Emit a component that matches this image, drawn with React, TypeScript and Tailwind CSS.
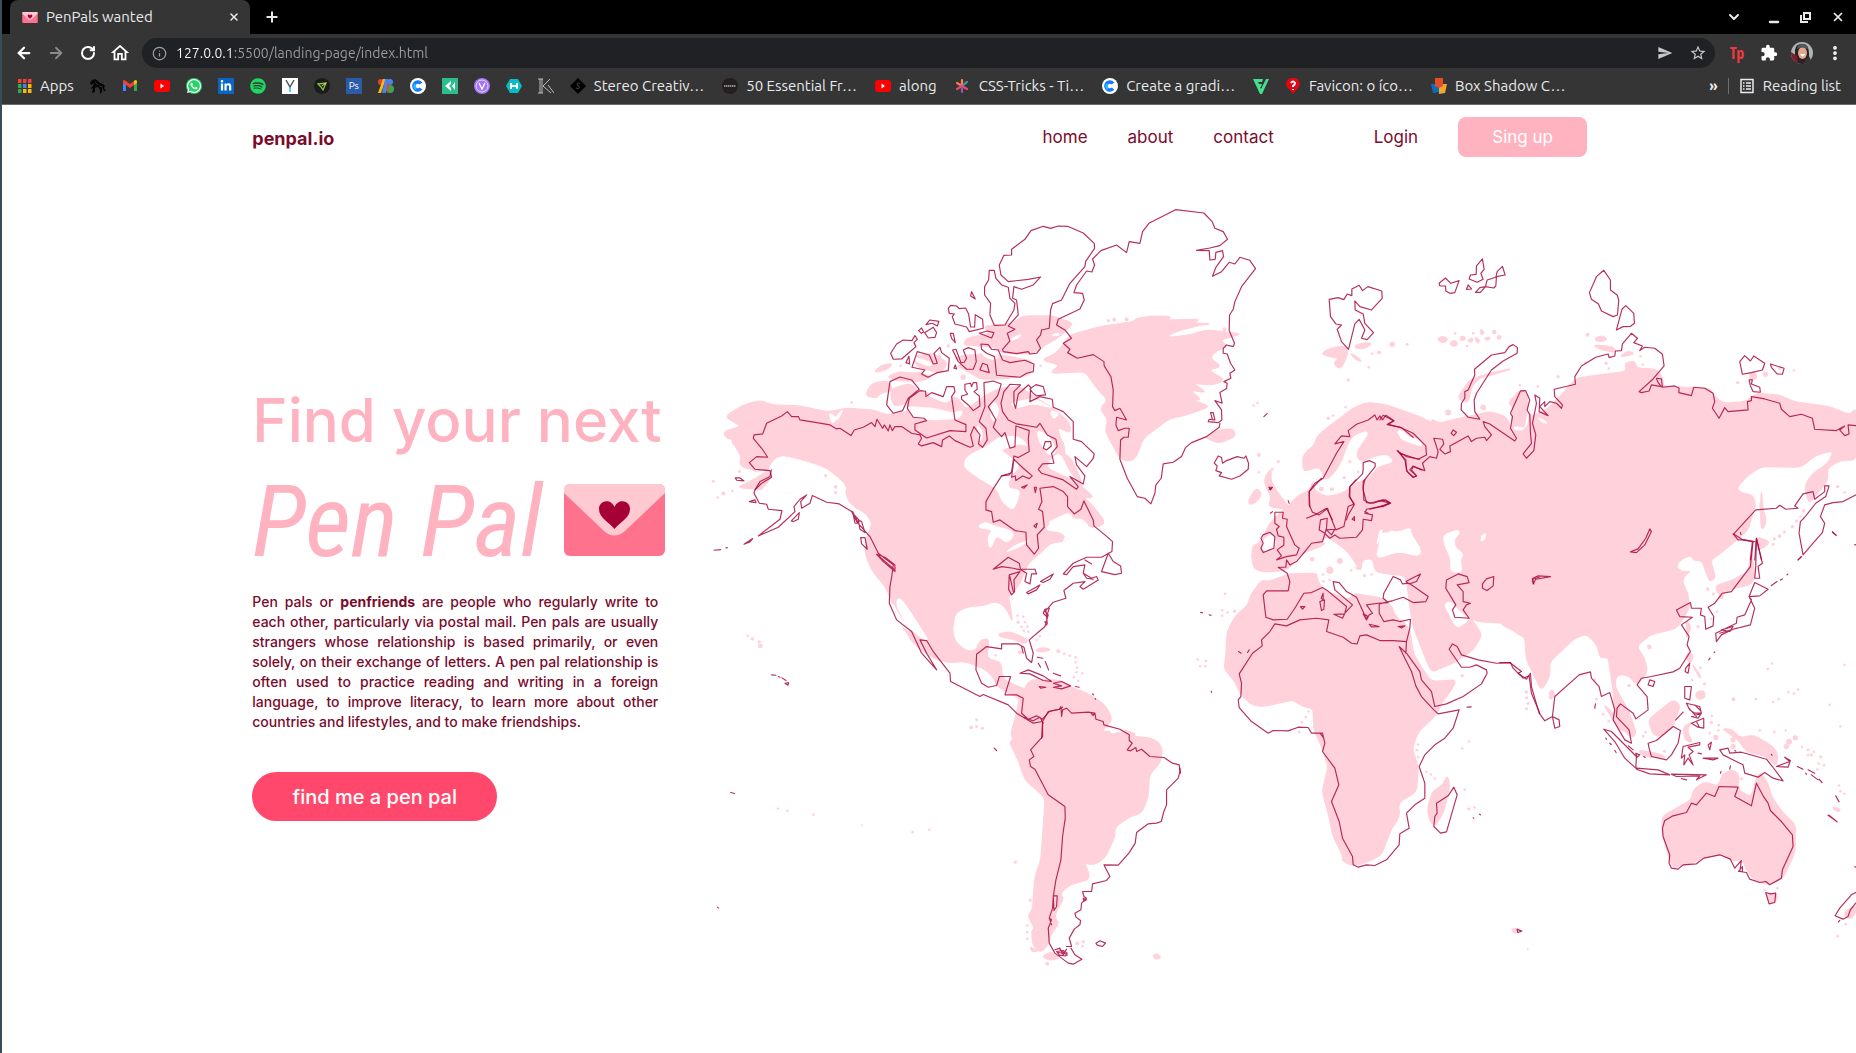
import React from 'react';
import type { ReactNode } from 'react';
import {
  ArrowLeft,
  ArrowRight,
  ChevronDown,
  EllipsisVertical,
  Info,
  Minus,
  Plus,
  RotateCw,
  X,
} from 'lucide-react';
import { FaLinkedinIn, FaSpotify, FaWhatsapp } from 'react-icons/fa';
import { MdExtension, MdOutlineHome, MdSend, MdStarBorder } from 'react-icons/md';

/* ---------- Envelope logo ---------- */

function Envelope({ className }: { className: string }) {
  return (
    <svg viewBox="0 0 101 72" className={className} aria-hidden="true">
      <rect width="101" height="72" rx="6" fill="#ff728d" />
      <path d="M6 0H95Q101 0 101 6V9L61 47Q50 56 40 47L0 9V6Q0 0 6 0Z" fill="#ffc9d2" />
      <path
        d="M50.500 45C45 38 35 34 35 25C35 16 47 14 50.500 23C54 14 66 16 66 25C66 34 56 38 50.500 45Z"
        fill="#a60037"
      />
    </svg>
  );
}

/* ---------- Favicons on the bookmarks bar ---------- */

function Icon({ children, box = '0 0 16 16' }: { children: ReactNode; box?: string }) {
  return (
    <svg viewBox={box} className="size-4 shrink-0" aria-hidden="true">
      {children}
    </svg>
  );
}

const AppsGrid = () => (
  <Icon>
    {['#f44336', '#f44336', '#f44336', '#34a853', '#4285f4', '#fbbc05', '#34a853', '#fbbc05', '#fbbc05'].map((c, i) => (
      <rect key={i} x={2 + (i % 3) * 5} y={1 + Math.floor(i / 3) * 5} width="3.500" height="4" fill={c} />
    ))}
  </Icon>
);

const Horse = () => (
  <Icon>
    <path
      d="M0 5L2 2L5 1L8 3L10 5L13 6L15 8L14 10L16 13L14 13L12 10L12 14L10 16L10 12L8 9L5 10L5 14L2 15L3 10L0 11L3 8L4 5L1 7Z"
      fill="#050505"
    />
    <path d="M5 4L8 7M9 8L13 9M6 9L7 13" stroke="#333" strokeWidth="1" />
  </Icon>
);

const Gmail = () => (
  <Icon>
    <path d="M1 13V4L4 6V13Z" fill="#4285f4" />
    <path d="M12 13V6L15 4V13Z" fill="#34a853" />
    <path d="M1 5V3Q2 1 4 3L8 6L12 3V7L8 10L4 7Z" fill="#ea4335" />
    <path d="M12 3Q14 1 15 3V5L12 7Z" fill="#fbbc04" />
  </Icon>
);

const YouTube = () => (
  <Icon>
    <rect y="2" width="16" height="12" rx="3" fill="#f00" />
    <path d="M6.500 5.500L10 8L6.500 10.500Z" fill="#fff" />
  </Icon>
);

const WhatsApp = () => (
  <span className="flex size-4 shrink-0 items-center justify-center rounded-full bg-[#25d366]">
    <FaWhatsapp className="size-4 text-white" />
  </span>
);

const LinkedIn = () => (
  <span className="flex size-4 shrink-0 items-center justify-center bg-[#0a66c2]">
    <FaLinkedinIn className="size-3 text-white" />
  </span>
);

const Spotify = () => <FaSpotify className="size-4 shrink-0 text-[#1ed760]" />;

const LetterY = () => (
  <Icon>
    <rect width="16" height="16" fill="#fff" />
    <path d="M4 2L8 9L12 2" fill="none" stroke="#555" strokeWidth="1.500" />
    <path d="M8 9V14" stroke="#39b6e8" strokeWidth="1.500" />
  </Icon>
);

const DarkArrow = () => (
  <Icon>
    <circle cx="8" cy="8" r="8" fill="#1b1b1b" />
    <path d="M4 6L12 5L9 12L7 9Z" fill="none" stroke="#8bc34a" strokeWidth="1.300" />
    <path d="M8 8L12 5" stroke="#d4e157" />
  </Icon>
);

const Photoshop = () => (
  <span className="flex size-4 shrink-0 items-center justify-center bg-[#2a5caa] font-['Ubuntu','Open_Sans',sans-serif] text-[10px] leading-none text-white">
    Ps
  </span>
);

const ColourMarks = () => (
  <Icon>
    <circle cx="3" cy="4" r="3" fill="#ea4335" />
    <path d="M8 1L3 15H0L5 1Z" fill="#fbbc04" />
    <path d="M7 1H10L8 15H4Z" fill="#4285f4" />
    <circle cx="12" cy="4" r="3" fill="#4285f4" />
    <circle cx="12" cy="11" r="4" fill="#34a853" />
    <path d="M9 5H11V14H9Z" fill="#ea4335" />
  </Icon>
);

const BlueC = () => (
  <Icon>
    <circle cx="8" cy="8" r="8" fill="#fff" />
    <path d="M11 5.500A4 4 0 1 0 11 10.500" fill="none" stroke="#1677ff" strokeWidth="3.500" />
    <path d="M5 6A4 4 0 0 0 6 11" fill="none" stroke="#19c8ff" strokeWidth="2" />
  </Icon>
);

const GreenSquare = () => (
  <Icon>
    <rect width="16" height="16" fill="#2dbe8d" />
    <path d="M9 3V6L7 8L9 10V13L3 8ZM13 4V12L10 8Z" fill="#fff" />
  </Icon>
);

const PurpleV = () => (
  <Icon>
    <circle cx="8" cy="8" r="8" fill="#a675f5" />
    <circle cx="8" cy="8" r="6" fill="none" stroke="#e5d6ff" />
    <path d="M5 5L8 11L11 5" fill="none" stroke="#fff" strokeWidth="1.300" />
  </Icon>
);

const TealHex = () => (
  <Icon>
    <path d="M4 1H12L16 8L12 15H4L0 8Z" fill="#08bdc9" />
    <path d="M5 5V11M11 5V11M5 8H11" stroke="#fff" strokeWidth="2" />
  </Icon>
);

const LetterK = () => (
  <Icon>
    <path d="M2 1V15M4 1V15M12 1L5 8L13 15M10 7L16 15M0 1H5M0 15H5" fill="none" stroke="#ccc" strokeWidth="0.900" />
  </Icon>
);

const Diamond = () => (
  <Icon>
    <path d="M8 0L16 8L8 16L0 8Z" fill="#000" />
    <path d="M10 6Q8 4 7 6Q7 8 9 8Q10 10 8 11L6 10" fill="none" stroke="#444" />
  </Icon>
);

const DarkDisc = () => (
  <Icon>
    <circle cx="8" cy="8" r="8" fill="#231f20" />
    <path d="M2 8H14" stroke="#aaa" strokeWidth="1.500" strokeDasharray="1.500 0.500" />
  </Icon>
);

const Burst = () => (
  <Icon>
    <g strokeWidth="2.200" strokeLinecap="round">
      <path d="M7 2V8" stroke="#ff8a50" />
      <path d="M2 5L7 8" stroke="#f57c4a" />
      <path d="M12 4L7 8" stroke="#3aa0b8" />
      <path d="M12 11L7 8" stroke="#e8476a" />
      <path d="M7 14V8" stroke="#8e5ab8" />
      <path d="M2 11L7 8" stroke="#e8476a" />
    </g>
  </Icon>
);

const GreenMark = () => (
  <Icon>
    <path d="M0 1H10L9 4H5L6 6H9L8 9H7L8 11L13 1H16L9 16H7Z" fill="#43e08f" />
  </Icon>
);

const RedPin = () => (
  <Icon>
    <path d="M8 0A6 6 0 0 1 12 11L8 16L4 11A6 6 0 0 1 8 0Z" fill="#e30613" />
    <path d="M6 5Q8 2 10 5Q10 7 8 8V9M8 11V12" fill="none" stroke="#fff" strokeWidth="2" />
  </Icon>
);

const Cups = () => (
  <Icon>
    <path d="M0 6H8V14L2 15Z" fill="#0a6ebd" />
    <path d="M8 6H16L14 15L8 16Z" fill="#f0a830" />
    <path d="M4 0H12V8L8 10L4 8Z" fill="#e44d26" />
  </Icon>
);

const ReadingListIcon = () => (
  <Icon>
    <path
      d="M2 1.500H14V14.500H2ZM4 5H5.500M4 8H5.500M4 11H5.500M7 5H12M7 8H12M7 11H12"
      fill="none"
      stroke="#e8eaed"
      strokeWidth="1.500"
    />
  </Icon>
);

type Bookmark = { name: string; icon: ReactNode; label?: string };

const BOOKMARKS: Bookmark[] = [
  { name: 'Horse', icon: <Horse /> },
  { name: 'Gmail', icon: <Gmail /> },
  { name: 'YouTube', icon: <YouTube /> },
  { name: 'WhatsApp', icon: <WhatsApp /> },
  { name: 'LinkedIn', icon: <LinkedIn /> },
  { name: 'Spotify', icon: <Spotify /> },
  { name: 'Y', icon: <LetterY /> },
  { name: 'Arrow', icon: <DarkArrow /> },
  { name: 'Photo editor', icon: <Photoshop /> },
  { name: 'Colours', icon: <ColourMarks /> },
  { name: 'Coolors', icon: <BlueC /> },
  { name: 'Green', icon: <GreenSquare /> },
  { name: 'Purple', icon: <PurpleV /> },
  { name: 'Teal', icon: <TealHex /> },
  { name: 'K', icon: <LetterK /> },
  { name: 'Stereo', icon: <Diamond />, label: 'Stereo Creativ…' },
  { name: 'Fonts', icon: <DarkDisc />, label: '50 Essential Fr…' },
  { name: 'Along', icon: <YouTube />, label: 'along' },
  { name: 'CSS-Tricks', icon: <Burst />, label: 'CSS-Tricks - Ti…' },
  { name: 'Gradient', icon: <BlueC />, label: 'Create a gradi…' },
  { name: 'Green mark', icon: <GreenMark /> },
  { name: 'Favicon', icon: <RedPin />, label: 'Favicon: o íco…' },
  { name: 'Box Shadow', icon: <Cups />, label: 'Box Shadow C…' },
];

/* ---------- Browser chrome ---------- */

function TabStrip() {
  return (
    <div className="flex h-[34px] items-center justify-between bg-black px-2 text-[#e8eaed]">
      <div className="flex h-full items-center">
        <div className="flex h-full w-60 items-center gap-2 rounded-t-lg bg-[#353535] pl-3 pr-2">
          <Envelope className="h-[11px] w-4" />
          <span className="flex-1 text-[15px] leading-5">PenPals wanted</span>
          <button aria-label="Close tab" className="flex size-4 items-center justify-center">
            <X className="size-3" strokeWidth={3} />
          </button>
        </div>
        <button aria-label="New tab" className="ml-[14px] flex size-4 items-center justify-center">
          <Plus className="size-4 shrink-0" strokeWidth={3} />
        </button>
      </div>
      <div className="flex items-center gap-4 pr-0.5">
        <button aria-label="Search tabs" className="mr-2 flex size-4 items-center justify-center">
          <ChevronDown className="size-4" strokeWidth={3} />
        </button>
        <button aria-label="Minimise" className="flex size-4 items-end justify-center">
          <Minus className="size-[14px] translate-y-1" strokeWidth={4} />
        </button>
        <button aria-label="Restore" className="flex size-4 items-center justify-center">
          <svg viewBox="0 0 12 12" className="size-3" fill="none" stroke="#e8eaed" strokeWidth="2">
            <path d="M4 2H10V8H4ZM1 4V11H8" />
          </svg>
        </button>
        <button aria-label="Close window" className="flex size-4 items-center justify-center">
          <X className="size-[14px]" strokeWidth={3} />
        </button>
      </div>
    </div>
  );
}

function Toolbar() {
  return (
    <div className="flex h-9 items-center bg-[#353535] pl-[10px] pr-[11px] text-white">
      <div className="flex items-center gap-2 pt-0.5">
        <button aria-label="Back" className="flex size-6 items-center justify-center">
          <ArrowLeft className="size-[18px]" strokeWidth={3} />
        </button>
        <button aria-label="Forward" className="flex size-6 items-center justify-center text-[#8a8a8a]">
          <ArrowRight className="size-[18px]" strokeWidth={2.5} />
        </button>
        <button aria-label="Reload" className="flex size-6 items-center justify-center">
          <RotateCw className="size-4" strokeWidth={3} />
        </button>
        <button aria-label="Home" className="flex size-6 items-center justify-center">
          <MdOutlineHome className="size-[22px]" />
        </button>
      </div>
      <div className="ml-[10px] mt-0.5 flex h-[30px] flex-1 items-center rounded-full bg-[#202124] pl-[10px] pr-2">
        <Info className="mr-[9px] size-[15px] shrink-0 text-[#9aa0a6]" />
        <input
          aria-label="Address"
          defaultValue="127.0.0.1:5500/landing-page/index.html"
          className="min-w-0 flex-1 bg-[linear-gradient(90deg,#ffffff_57px,#9aa0a6_57px)] bg-clip-text text-sm text-transparent outline-none"
        />
        <div className="flex items-center gap-4 text-[#c4c7cc]">
          <button aria-label="Send" className="flex">
            <MdSend className="size-4" />
          </button>
          <button aria-label="Bookmark this page" className="flex">
            <MdStarBorder className="size-[18px]" />
          </button>
        </div>
      </div>
      <div className="ml-3 flex items-center gap-3 pt-0.5">
        <button
          aria-label="Tp extension"
          className="flex size-5 items-center justify-center font-['Open_Sans_Condensed','Ubuntu',sans-serif] text-base font-black leading-none text-[#f03a3f]"
        >
          Tp
        </button>
        <button aria-label="Extensions" className="flex size-5 items-center justify-center">
          <MdExtension className="size-[18px]" />
        </button>
        <button aria-label="Profile" className="flex">
          <svg viewBox="0 0 22 22" className="size-[22px]" aria-hidden="true">
            <clipPath id="avatar">
              <circle cx="11" cy="11" r="11" />
            </clipPath>
            <g clipPath="url(#avatar)">
              <rect width="22" height="22" fill="#a9b7b5" />
              <path d="M4 22V8Q5 1 12 2Q18 3 18 11V22Z" fill="#2b2023" />
              <path d="M0 10L6 14L7 22H0Z" fill="#7c1f2d" />
              <ellipse cx="11.500" cy="11" rx="4.500" ry="6" fill="#e0a68e" />
              <path d="M9 12H14Q12 17 9 12Z" fill="#fff" />
              <path d="M6 7Q7 1 12 2Q17 2 17 7Q11 4 6 7Z" fill="#55555c" />
              <path d="M14 18L18 14L22 22H12Z" fill="#3a3034" />
            </g>
          </svg>
        </button>
        <button aria-label="Menu" className="flex size-5 items-center justify-center">
          <EllipsisVertical className="size-[18px]" strokeWidth={3} />
        </button>
      </div>
    </div>
  );
}

function BookmarksBar() {
  return (
    <nav
      aria-label="Bookmarks"
      className="flex h-[35px] items-center justify-between whitespace-nowrap border-b border-[#6a6a6a] bg-[#353535] pb-0.5 pl-[14px] pr-[15px] text-[15px] leading-5 text-[#e8eaed]"
    >
      <div className="flex min-w-0 items-center gap-4">
        <a href="#apps" className="flex items-center gap-2">
          <AppsGrid />
          Apps
        </a>
        {BOOKMARKS.map((b) => (
          <a key={b.name} href="#bookmark" aria-label={b.name} className="flex items-center gap-2">
            {b.icon}
            {b.label && <span className="pr-0.5">{b.label}</span>}
          </a>
        ))}
      </div>
      <div className="flex items-center gap-[10px]">
        <button aria-label="More bookmarks" className="font-bold">
          »
        </button>
        <span className="h-4 w-px bg-[#6f6f6f]" />
        <a href="#reading" className="flex items-center gap-2">
          <ReadingListIcon />
          Reading list
        </a>
      </div>
    </nav>
  );
}

/* ---------- World map: soft land shapes under thin coast lines ---------- */

type Region = { at: string; land: string; water?: string; coast: string; dots?: number[][] };

const REGIONS: Region[] = [
  // Alaska, northern Canada and the Arctic islands
  {
    at: 'translate(0 0)',
    land:
      'M75 680L130 645L182 631L215 645L300 648L385 666L440 655L520 660L560 675L625 665L620 640L660 600L720 625L770 620L800 660L850 620L900 595L960 590L1010 625L1060 655L1110 700L1112 730L1070 710L1095 780L1060 780L1110 800L1140 860L1150 905L240 905L210 900L115 893L160 870L205 842L160 838L130 835L118 815L130 795L105 775L130 748L85 748L68 728L100 715L125 710Z' +
      'M495 617L515 580L565 572L580 600L540 610L530 625ZM520 548L545 525L580 520L560 540ZM560 560L600 545L640 550L670 545L700 560L660 575L590 572ZM640 500L700 490L745 520L720 550L650 530ZM570 600L630 580L655 600L620 640L580 650Z' +
      'M850 410L940 400L970 378L1060 378L1120 400L1080 440L1020 475L1000 492L910 490L880 470L790 465L800 445L870 430ZM770 500L860 490L930 500L1000 515L990 555L900 568L830 560L760 520ZM800 540L860 545L940 565L840 568Z',
    water:
      'M860 770L800 800L790 830L830 860L895 900L905 935L940 962L955 925L960 900L922 895L930 860L960 830L930 800L900 780L960 760L985 770L960 740L900 740Z' +
      'M385 668L398 705L410 680ZM400 690L430 655L415 690ZM625 650L700 655L760 670L790 660L780 685L700 690L650 685L630 670ZM680 615L740 640L760 620L725 610ZM930 640L1000 625L1060 655L1000 640L950 655ZM1010 720L1050 740L1070 785L1050 800L1020 760ZM1050 660L1080 670L1060 690ZM1080 790L1110 850L1130 870L1080 850L1040 830L1060 800ZM880 630L900 660L880 700L870 660ZM830 700L850 730L840 760Z' +
      'M210 830L235 800L265 802L330 820L380 838L432 880L440 905L180 905L215 870ZM925 450L965 432L960 442L935 452ZM1050 438L1075 428L1080 436Z' +
      'M640 500L700 520L690 530L645 512ZM740 495L790 520L760 530ZM840 470L900 500L880 510L850 500ZM660 545L730 552L700 560Z',
    coast:
      'M935 195L935 178L975 148L993 122L1030 109L1052 115L1075 108L1103 109L1150 129L1183 160L1184 175L1157 215L1155 230L1110 280L1085 330L1058 341L1052 360L1048 415L1025 420L1022 435L1010 450L1022 475L1010 490L990 492L985 485L950 491L910 485L908 478L930 453L922 430L945 418L925 408L955 375L950 330L938 325L942 290L965 298L1000 285L1022 261L985 268L925 275L903 255L898 225L912 196Z' +
      'M868 241L883 241L888 265L905 285L925 292L930 325L945 340L942 360L915 405L883 406L870 375L872 340L854 315L854 290L866 270ZM815 305L826 327L812 318Z' +
      'M745 355L752 346L770 348L778 356L797 354L806 372L812 411L824 411L826 374L848 388L850 415L808 425L800 411L765 402L757 380L763 372L748 370ZM838 430L862 423L882 428L875 444Z' +
      'M678 404L690 390L717 394L712 408L697 400ZM674 428L700 412L710 428L705 442L685 444ZM656 422L665 414L671 426L664 430ZM751 430L760 430L766 458L755 445Z' +
      'M572 490L590 462L610 450L636 452L645 437L652 448L642 458L648 470L625 490L605 507L580 508ZM618 518L627 499L629 522ZM652 485L688 495L700 522L712 520L702 490L720 472L725 488L748 505L745 542L712 548L684 562L665 552L675 540L636 532Z' +
      'M758 480L768 478L783 518L793 517L800 505L790 480L805 473L825 480L829 515L820 538L800 538L775 515ZM762 535L766 525L770 537ZM840 540L848 520L862 525L868 548ZM843 462L865 464L875 478L895 480L908 510L930 518L975 511L1002 522L1000 545L980 550L960 562L890 556L884 500L860 490L845 478Z' +
      'M570 575L600 561L635 570L658 598L625 625L608 662L580 670L560 645ZM660 602L677 604L678 620L695 608L730 620L740 590L762 590L765 605L755 620L765 690L798 704L798 725L750 722L680 744L645 720L645 702L680 692L672 685L640 682L622 655L628 625Z' +
      'M795 583L812 580L815 590L820 578L830 578L832 598L822 605L838 618L840 648L820 662L805 645L785 628L785 618L803 613L795 600Z' +
      'M903 640L912 605L930 583L962 585L942 605L942 640L947 655L955 612L985 585L992 592L990 635L1020 620L1057 628L1060 652L1090 665L1120 695L1120 748L1145 755L1183 792L1180 805L1160 830L1125 800L1130 825L1155 858L1150 882L1110 860L1135 890L1130 898L1090 870L1025 850L1015 838L1028 822L1062 820L1055 790L1072 770L1068 748L1042 735L1020 700L1010 712L950 702L925 690L908 665ZM990 597L1008 584L1030 590L1037 615L1010 618L998 608ZM1030 775L1036 755L1052 755L1054 768L1040 780ZM942 808L970 835L997 858L988 866L968 858L948 872L946 858L935 862Z' +
      'M165 900L185 880L215 862L210 842L165 838L148 818L170 800L203 802L185 775L160 745L162 735L188 732L200 700L245 678L262 665L275 680L295 680L300 690L350 698L390 705L410 717L420 715L453 737L463 720L490 712L515 698L525 710L531 688L548 715L553 705L565 723L570 705L577 722L585 710L605 710L635 730L660 735L665 745L655 762L665 768L700 758L725 770L728 750L748 738L765 752L810 772L820 768L812 735L822 710L840 735L836 762L848 772L862 750L858 715L838 695L855 650L852 578L880 573L904 582L893 618L865 650L888 690L880 712L905 740L915 728L930 775L945 770L948 708L988 722L985 748L988 785L955 803L942 798L935 845L928 855L905 858',
    dots: [[40, 874, 4], [118, 845, 4], [455, 638, 4], [1022, 528, 4], [745, 468, 5], [602, 528, 4], [790, 562, 8], [377, 857, 5], [407, 890, 5], [720, 500, 5]],
  },
  // North and Central America
  {
    at: 'translate(0 750)',
    land:
      'M90 0L115 30L125 60L118 75L150 85L165 95L205 88L190 110L110 143L160 135L200 110L240 65L270 52L380 88L432 130L440 180L500 230L515 262L500 290L495 340L515 390L555 440L570 470L590 530L640 610L690 650L740 668L800 665L860 690L885 720L905 750L960 775L960 830L940 860L935 900L1290 900L1310 880L1215 860L1235 845L1230 820L1210 790L1160 760L1110 740L1050 730L1005 725L980 750L920 725L905 705L905 668L860 655L868 600L850 597L835 610L830 630L800 635L765 605L757 570L765 520L800 500L850 497L880 485L905 490L925 515L938 548L930 490L925 470L955 440L975 395L985 370L1020 340L1050 310L1110 300L1090 275L1150 240L1170 262L1200 260L1215 245L1180 200L1150 170L1180 175L1165 155L1130 130L1100 80L1090 0Z' +
      'M895 582L930 575L985 600L975 612L945 600L900 590ZM1005 630L1030 622L1055 630L1020 637Z',
    water:
      'M830 262L855 245L890 262L925 268L945 285L920 310L890 285L870 330L862 290L880 270ZM915 338L950 314L992 300L960 320ZM1035 270L1060 240L1110 218L1122 240L1145 235L1170 262L1130 285L1085 308L1100 290L1080 275ZM592 475L605 478L640 530L685 600L670 600L625 560L590 500ZM575 485L600 530L640 575L620 570L590 540ZM465 205L500 225L517 262L490 245Z' +
      'M205 85L230 52L262 52L330 70L380 88L432 130L437 175L460 205L400 180L300 170L215 110ZM1040 250L1080 230L1110 218L1090 250Z',
    coast:
      'M930 100L905 108L878 150L858 185L858 210L875 215L880 247L900 240L945 272L978 277L980 315L1003 343L1016 325L1012 285L1033 262L1028 215L1016 208L1026 185L1020 145L1060 140L1090 155L1103 170L1103 200L1123 222L1143 208L1152 183L1180 240L1182 258L1215 285L1238 305L1236 335L1205 352L1160 352L1120 370L1090 402L1100 404L1120 380L1155 375L1150 400L1175 415L1190 410L1195 420L1150 448L1140 440L1155 425L1120 430L1092 452L1098 475L1060 487L1035 515L1045 525L1035 560L988 600L1000 640L995 668L980 655L972 622L955 612L905 612L905 627L860 620L830 643L828 690L845 730L865 742L890 737L898 710L932 710L915 765L950 765L970 775L965 820L985 838L1010 828L1028 838L1048 815L1078 808L1088 802' +
      'M165 150L162 160L178 190L200 193L205 208L246 212L240 238L175 288L235 262L285 215L282 200L300 178L320 165L302 185L305 205L330 190L337 167L380 187L418 192L455 215L470 245L510 290L535 340L580 375L575 412L570 440L568 490L590 540L635 575L665 640L710 690L680 640L660 600L680 602L700 635L750 700L752 725L840 770L850 764L925 795L950 820L1000 850L1028 845L1025 895' +
      'M880 388L925 352L958 370L962 390L940 385L905 380ZM928 405L960 395L942 420L944 455L935 465L926 448ZM960 388L1005 388L1010 402L995 402L990 432L975 425L980 400ZM980 458L1020 435L1010 450L985 462ZM1022 425L1060 402L1050 418L1030 428ZM1205 395L1225 340L1240 365L1262 378L1265 400L1245 404ZM1150 400L1160 415L1180 418' +
      'M274 243L298 218L295 238L280 245ZM148 185L165 180L168 188ZM106 114L120 114L132 123L110 121ZM132 313L158 296L150 306ZM458 215L475 250L465 250ZM475 240L485 245L495 278L480 268ZM482 293L495 293L502 328L485 312ZM530 343L555 352L585 375L585 395L550 365ZM1155 360L1175 372M1035 508L1048 505L1040 530L1030 520ZM1035 545L1040 555' +
      'M960 700L985 690L1030 708L1055 725L1030 722L990 702ZM1060 730L1085 725L1112 738L1085 747L1060 742L1085 738ZM1018 740L1038 742L1022 745ZM1126 740L1138 742M1015 670L1022 682M1012 652L1028 655M1036 665L1046 690M1060 700L1082 708M965 620L970 640M965 142L982 135L972 145ZM1003 142L1010 142L1006 158ZM1002 258L1012 250L1008 264ZM965 830L1000 843L1020 832L1030 850M255 730L266 728L264 736ZM215 705L228 706M235 710L240 712M246 714L258 722M42 331L62 329M78 324L82 323M1178 762L1181 765M1186 776L1187 778M165 150L180 125L210 110L214 90' +
      'M536 348L582 388M1038 510L1042 552M460 222L480 244M930 410L940 455',
    dots: [[118, 95, 4], [40, 124, 4], [70, 161, 6], [97, 153, 4], [53, 173, 4], [143, 588, 4], [157, 597, 5], [178, 606, 5], [181, 618, 7], [953, 527, 4], [970, 530, 4], [955, 547, 5], [975, 547, 4], [982, 560, 4], [965, 561, 4], [972, 573, 4], [985, 575, 4], [1020, 589, 4], [1010, 600, 4], [1075, 634, 6], [1093, 642, 4], [1110, 647, 4], [1127, 652, 4], [1127, 667, 4], [1131, 683, 4], [1147, 700, 4], [1122, 712, 4], [1135, 723, 4], [1130, 697, 4], [830, 840, 4], [813, 863, 5], [830, 860, 4], [847, 865, 4], [960, 638, 6], [887, 646, 4], [852, 225, 4], [407, 142, 5], [407, 158, 5]],
  },
  // Greenland, Iceland and Svalbard
  {
    at: 'translate(960 0)',
    land:
      'M65 510L110 490L150 435L240 410L340 395L350 385L400 378L455 380L440 390L540 388L520 400L575 402L500 420L445 440L500 437L560 420L610 425L665 432L600 450L625 470L590 480L570 505L605 530L565 540L615 570L580 585L520 580L560 608L510 600L545 630L515 628L570 650L500 675L450 685L410 715L370 745L350 800L330 815L300 805L270 750L255 720L265 690L240 655L265 630L235 600L195 545L90 550L120 525ZM-20 410L0 380L90 380L160 400L140 420L90 440Z' +
      'M555 740L590 722L640 716L648 738L600 760L570 750ZM905 490L930 475L975 468L985 485L975 515L960 538L940 520L958 505L920 498ZM1000 472L1025 458L1060 460L1030 478ZM990 488L1010 500L1028 515L1008 510Z' +
      'M865 780L885 765L890 740L920 715L1000 655L1040 637L1100 645L1200 680L1240 700L1240 990L820 990L800 970L820 930L870 910L920 880L900 830L850 845L848 800Z' +
      'M735 860L755 835L752 870L765 895L790 930L815 960L745 950L755 920L735 885ZM690 920L712 893L726 915L705 940L686 943Z',
    water:
      'M1000 740L1040 723L1043 735L1025 760L1005 790L1020 820L1070 800L1105 795L1118 815L1070 830L1050 860L1000 880L970 905L920 918L885 900L890 880L920 875L950 845L970 810L985 765ZM1140 735L1200 750L1210 770L1160 755ZM443 440L480 424L560 405L580 410L520 428Z',
    coast:
      'M162 308L170 285L200 243L216 246L224 225L218 207L243 182L290 165L320 188L328 155L360 160L368 125L387 100L467 59L552 69L577 95L585 115L610 125L623 148L600 167L570 174L530 181L568 182L570 210L586 208L588 187L608 182L611 200L588 232L578 259L605 245L628 217L645 222L660 202L690 211L707 236L665 290L645 335L640 358L629 375L628 422L644 460L640 470L620 465L610 475L610 490L622 492L632 520L645 540L630 550L633 565L612 575L622 580L620 596L600 608L607 640L585 632L605 660L606 690L595 698L565 695L568 688L585 690L580 668L572 668L578 690M600 700L598 712L560 740L515 758L497 773L485 800L460 817L430 822L424 865L408 885L405 910L393 942L375 925L352 920L322 865L300 808L302 750L312 742L325 742L328 715L315 715L295 722L288 705L290 682L320 690L300 655L285 662L278 650L280 600L273 560L253 528L252 515L220 494L172 505L143 488L150 478L130 460L155 445L135 420L110 405L115 388L180 357L193 330L188 310L162 308' +
      'M583 820L595 798L605 803L608 820L620 812L652 800L672 805L678 798L686 820L685 838L660 858L635 868L598 858L605 848L588 842L592 828ZM732 680L742 671' +
      'M928 328L955 323L972 329L982 312L996 317L996 297L1018 286L1028 302L1044 290L1086 303L1087 325L1055 360L1020 350L1005 333L1006 360L1030 372L1035 400L1061 428L1042 449L1025 445L1035 420L1018 388L1005 402L986 478L965 455L952 418L965 405L948 402L932 380Z' +
      'M747 892L758 892L752 900ZM805 932L808 940' +
      'M860 985L885 975L920 955L938 990M870 950L868 905L885 880L910 865L950 790L972 755L945 762L965 738L990 740L985 722L1010 703L1045 690L1065 675L1072 690L1080 678L1088 690L1098 676L1122 692L1102 704L1145 713L1180 742M1135 783L1155 810L1162 845L1180 862L1190 858L1170 840L1180 828L1205 840M1135 785L1160 800L1200 808M1030 840L1030 818L1048 812L1066 820L1066 830L1030 875L1030 900L1040 938L1060 940L1090 930L1110 938L1090 948L1050 958M1030 840L1028 852L990 890L990 920L1003 945L985 975L980 990',
    dots: [[192, 430, 8], [265, 392, 5], [283, 389, 6], [320, 388, 6], [614, 418, 6], [1117, 463, 8], [1162, 463, 4], [1077, 488, 6], [1056, 492, 4], [1047, 532, 4], [985, 570, 5], [701, 647, 4], [713, 639, 4], [717, 795, 6], [717, 847, 4], [775, 815, 5], [757, 838, 4], [925, 685, 5], [940, 677, 4], [977, 652, 4], [905, 897, 7], [936, 899, 5], [1015, 846, 4], [973, 863, 5], [990, 815, 5]],
  },
  // Siberia and the Russian Arctic
  {
    at: 'translate(2040 120)',
    land:
      'M0 530L60 540L115 575L118 600L150 600L155 565L175 580L240 565L330 545L380 560L395 600L400 530L385 520L420 480L440 490L450 560L500 540L550 490L590 445L680 432L740 425L735 400L765 393L770 415L830 418L850 445L850 470L990 475L1005 500L1030 520L1100 515L1130 490L1200 495L1240 515L1350 530L1410 555L1428 535L1428 690L1380 692L1342 715L1345 752L1287 822L1275 765L1300 730L1345 700L1362 662L1310 675L1262 712L1145 710L1105 735L1070 775L1085 790L1120 795L1128 830L1100 890L1060 940L990 995L0 995Z' +
      'M232 505L270 450L330 430L398 415L350 432L300 442L275 470L265 520ZM170 328L190 318L205 328L192 340ZM210 338L228 330L234 345L218 350ZM240 322L252 318L258 328L244 332ZM262 332L280 322L275 338ZM284 320L300 330L294 342ZM300 310L312 302L310 314ZM312 326L332 320L325 332ZM640 345L700 350L710 368L660 358ZM642 328L665 316L685 328L660 336ZM718 382L745 362L765 372ZM1145 780L1150 840L1160 870L1150 900L1142 840ZM300 530L320 535L310 540Z',
    water:
      'M50 600L75 605L95 635L65 630ZM0 695L20 680L40 690L30 700ZM470 560L505 578L490 580ZM0 910L50 908L95 893L90 920L125 965L115 978L60 965L0 978ZM190 915L240 900L220 930L230 960L250 975L225 990L195 945ZM302 920L318 908L315 930ZM910 990L935 980L930 990ZM400 590L440 595L445 560L450 520L435 600L405 600Z',
    coast:
      'M178 160L197 144L213 160L238 152L225 188L210 190L198 183L197 168L180 168ZM308 87L313 118L303 130L310 148L292 157L268 147L272 135L289 133L290 108ZM260 178L265 165L275 177ZM287 187L300 173L317 170L302 187ZM317 170L322 150L348 142L352 125L368 109L376 135L350 140L348 168L342 174Z' +
      'M672 121L692 150L692 180L712 195L717 210L713 255L700 260L665 243L656 222L635 208L629 188L650 140ZM738 227L762 250L764 280L752 289L730 290L710 300L727 237Z' +
      'M400 344L413 353L412 370L370 393L335 420L290 490L283 510L285 545L300 568L265 562L244 540L245 520L255 505L255 485L265 480L285 435L284 418L335 375L375 368L388 350Z' +
      'M0 570L10 556L42 573L25 583L60 592L100 610L138 648L140 675L115 688L60 670L52 662L78 690L80 722L100 742L110 738L95 720L100 710L135 722L128 700L150 680L170 685L175 665L162 625L188 628L192 642L180 658L195 672L212 665L210 648L265 618L275 635L290 625L315 622L320 632L335 615L315 590L310 575L330 582L405 633L410 625L392 595L398 560L392 550L422 483L437 482L450 510L442 540L450 555L452 610L455 640L430 672L440 685L462 662L468 615L458 580L470 520L465 495L480 505L478 545L505 557L480 530L495 515L495 530L510 515L530 520L545 535L548 525L525 500L523 478L587 463L585 440L605 408L648 382L685 372L688 383L705 378L707 363L725 362L728 342L755 310L773 325L762 338L788 348L780 362L795 352L825 355L848 373L853 408L820 447L778 485L785 488L808 483L815 465L845 470L835 458L830 445L845 447L848 472L885 468L898 474L897 488L935 497L942 472L975 475L1000 490L1005 515L998 535L1018 565L1035 533L1045 545L1105 540L1103 515L1115 512L1115 500L1155 507L1200 520L1205 538L1230 560L1265 553L1298 565L1305 598L1370 602L1395 588L1380 600L1395 617L1408 612L1405 585L1428 587' +
      'M214 610L220 600L230 607L222 617ZM1080 395L1095 377L1112 393L1122 378L1155 400L1148 420L1115 428L1088 433ZM1172 402L1213 415L1208 433L1192 432L1175 412ZM1108 450L1118 450L1115 462L1140 472L1142 487L1120 485L1112 468Z' +
      'M810 897L815 905L795 945L770 968L752 966L775 957L798 925ZM0 812L18 810L32 820L10 830L0 830M1128 840L1190 835L1200 826L1218 838L1255 835L1245 828L1270 792L1300 785L1305 808L1335 785L1335 768L1348 768L1338 800L1308 820L1275 862L1262 875L1258 910L1270 975L1300 940L1328 908L1335 880L1322 860L1335 825L1360 818L1390 815L1428 795M1128 840L1062 912L1090 930L1118 935L1112 990M1130 925L1145 990M1125 990L1130 925M1358 905L1370 917M1255 990L1265 980',
    dots: [[37, 343, 7], [82, 343, 4], [0, 367, 4], [343, 306, 7], [305, 302, 5], [226, 310, 4], [262, 348, 4], [280, 310, 4], [623, 314, 6], [679, 400, 5], [687, 416, 4], [782, 379, 4], [789, 404, 4], [535, 440, 5], [420, 466, 4], [474, 470, 4], [205, 548, 9], [310, 532, 8], [617, 398, 4], [1243, 421, 4], [1074, 458, 5], [1157, 433, 8], [1120, 438, 12], [1200, 415, 5], [1374, 770, 5], [1395, 787, 4], [1272, 842, 5], [1262, 860, 4], [1250, 873, 4], [1238, 890, 5], [1214, 906, 4], [1199, 918, 5], [1184, 927, 4], [1180, 943, 4], [358, 322, 7]],
  },
  // South America
  {
    at: 'translate(780 1470)',
    land:
      'M165 120L152 165L162 178L148 187L175 240L195 300L235 335L256 355L250 440L243 540L225 590L218 690L203 708L225 745L215 752L218 795L240 818L262 800L275 760L298 730L285 715L290 690L312 658L300 640L330 615L385 600L388 580L372 548L400 556L435 535L465 470L465 442L510 410L545 400L565 350L568 285L600 250L608 215L600 190L575 175L520 170L500 150L455 152L430 145L457 118L440 85L380 60L330 20L300 0L210 0L180 50Z' +
      'M245 830L275 815L300 835L270 842ZM210 800L235 815L215 815ZM578 824L598 826L602 836L585 835ZM100 0L118 0L132 25L118 25Z',
    water: 'M430 152L445 140L500 155L480 152L455 162L450 150Z',
    coast:
      'M248 125L265 95L298 88L303 80L305 110L308 90L320 85L335 100L385 97L405 100L408 118L430 125L432 135L480 148L508 165L508 182L517 190L502 210L512 213L528 203L530 215L545 208L570 230L612 233L638 250L658 255L660 275L655 295L620 330L620 375L612 395L604 425L590 430L565 432L530 458L526 490L507 520L475 556L432 555L450 590L440 602L398 612L395 635L368 635L372 650L380 655L365 670L363 690L345 700L348 712L362 722L360 735L343 748L328 775L335 800L320 800M333 805L345 825L366 838L340 853L325 850L285 820L268 790L265 745L275 720L268 715L278 685L280 650L288 600L303 540L308 470L316 415L315 380L265 345L225 268L212 260L208 240L222 230L212 210L248 170L248 125' +
      'M280 648L292 648L290 680L282 692ZM268 715L275 735M290 815L310 812L322 820L318 828L298 826ZM285 810L300 805L310 825L320 808M295 818L318 822M300 810L322 826M370 655L380 660L372 664ZM408 790L420 783L437 790L428 800L412 796ZM103 205L110 212M392 98L403 100L400 107Z',
    dots: [[50, 120, 4], [34, 143, 5], [50, 140, 4], [67, 145, 4], [166, 547, 5], [211, 661, 5], [202, 737, 4], [202, 757, 4], [202, 777, 4], [352, 791, 6], [370, 786, 5], [368, 799, 4], [262, 852, 6], [590, 830, 9]],
  },
  // Europe, Africa and the Middle East
  {
    at: 'translate(1440 870)',
    land:
      'M245 300L210 350L205 375L165 410L142 455L137 540L132 565L165 605L180 640L215 675L250 680L340 660L370 680L400 685L402 750L425 800L445 860L427 935L445 1000L460 1070L490 1130L485 1140L515 1158L560 1148L605 1125L635 1045L660 1010L655 970L710 935L715 860L697 805L715 755L770 705L785 670L815 630L830 600L755 605L730 570L700 520L690 450L640 385L610 355L520 340L510 360L430 330L412 300L412 280L330 282L265 305Z' +
      'M220 195L215 230L222 265L245 275L290 275L330 265L350 235L380 215L410 205L430 195L450 180L500 225L520 262L545 272L545 240L580 235L585 275L640 285L668 285L680 300L690 380L700 440L735 530L755 577L830 545L880 510L907 465L870 410L890 425L980 430L1015 465L1035 470L1040 540L1080 615L1080 -10L400 0L390 30L350 50L330 75L300 100L270 130L240 190Z' +
      'M803 885L810 920L790 1000L765 1040L748 1020L743 985L758 935L790 915Z',
    water:
      'M590 230L600 185L630 150L660 160L690 145L695 165L725 210L700 222L650 215L605 232ZM795 165L835 150L840 160L820 180L822 200L852 222L840 240L848 278L810 275L815 240L792 190ZM792 372L815 365L830 385L870 420L830 445L812 410ZM612 335L640 290L668 295L655 358L612 358ZM640 378L675 410L672 430L645 400ZM903 175L915 160L915 178L905 185ZM400 0L525 0L500 30L455 45L405 25ZM600 150L610 150L590 200Z' +
      'M245 185L275 160L288 185L280 210L250 215ZM425 180L445 175L500 215L532 262L520 262L470 220Z',
    coast:
      'M425 -5L388 35L388 75L398 97L418 105L443 85L452 110L468 150L492 140L505 80L523 72L508 50L510 20L528 0M555 0L550 20L552 60L570 70L600 62L632 70L600 80L560 88L555 100L578 105L575 122L550 118L548 150L530 172L480 175L465 165L450 175L432 158L418 150L422 120L442 115L440 145L428 185L395 190L375 215L350 245L330 255L320 240L318 262L295 262L322 280L330 305L325 333L260 333L250 345L258 412L280 420L322 418L345 385L372 340L395 338L428 323L440 330L500 380L495 400L518 375L465 330L460 305L478 308L500 335L530 352L552 400L560 420L568 405L578 400L560 375L595 370L625 368L610 355L612 340L640 290L662 300L668 312L688 310L745 350L738 365L700 368L670 352L640 362L598 372L598 400L612 425L640 420L660 425L692 418L690 445L680 485L640 482L600 482L560 465L540 468L532 492L515 490L490 472L440 455L447 420L410 415L360 420L320 438L285 432L270 455L245 480L247 498L218 520L178 582L185 610L183 650L175 660L178 683L215 725L265 760L280 752L325 753L355 742L385 743L395 760L428 760L435 790L428 815L465 865L477 915L455 965L478 1025L488 1075L518 1130L520 1155L535 1162L560 1155L585 1157L620 1140L658 1095L660 1062L688 1045L680 1000L705 975L735 955L735 910L718 860L735 825L765 795L795 775L820 745L838 690L775 702L762 690L725 650L708 618L695 575L675 535L658 500L680 520L720 575L725 600L755 635L765 680L800 672L850 650L905 612L922 580L920 570L890 555L870 562L845 562L808 508L818 492L832 500L845 525L895 540L950 550L992 548L1000 565L1030 595L1048 588L1055 640L1080 700' +
      'M680 485L678 520M678 305L722 282L710 305L688 312ZM285 97L310 97L308 115L322 118L320 140L345 195L358 205L350 225L320 230L290 240L305 228L292 210L312 195L312 172L295 168L290 148L298 140L285 130ZM250 165L270 157L285 170L282 205L250 218L243 205L250 190L243 175ZM272 100L278 95M275 25L268 28M362 380L375 380L368 388ZM420 365L434 360L432 388L425 392ZM424 355L430 340L430 360ZM462 403L494 402L488 415ZM550 402L562 408L560 420ZM568 433L598 440L575 441ZM655 440L675 438L665 444ZM440 150L465 148L455 165ZM517 118L524 110L524 122ZM555 95L565 100' +
      'M800 300L835 282L862 290L868 308L832 315L850 335L850 365L872 370L860 375L850 390L868 415L825 412L818 390L828 375L798 325ZM908 312L920 297L942 290L940 318L922 332L908 325ZM1078 292L1058 298L1062 312M822 922L832 945L800 1056L782 1060L762 1040L765 1010L772 1000L770 970L805 948ZM862 682L874 681M176 515L184 520M203 518L208 510M62 397L68 399M88 405L94 406M94 634L95 637M899 1003L902 1005M880 1014L882 1015M0 865L2 880M420 760L432 775',
    dots: [[136, 342, 4], [127, 391, 4], [143, 398, 4], [164, 394, 5], [127, 407, 4], [53, 539, 4], [78, 543, 4], [61, 559, 4], [77, 559, 4], [386, 695, 4], [378, 712, 4], [366, 727, 4], [358, 757, 4], [715, 794, 4], [711, 811, 4], [715, 832, 4], [740, 876, 4], [753, 884, 4], [765, 896, 4], [867, 785, 4], [847, 806, 4], [855, 930, 4], [867, 987, 5], [884, 983, 4], [847, 587, 5], [1041, 636, 4], [1040, 654, 4], [1045, 670, 4], [1040, 687, 4], [397, 238, 7], [450, 271, 11], [429, 284, 4], [431, 304, 4], [449, 300, 4], [514, 271, 4], [554, 287, 5], [575, 284, 4], [480, 243, 9], [423, 27, 6], [456, 28, 6]],
  },
  // East Asia, Indonesia and Australia
  {
    at: 'translate(2400 930)',
    land:
      'M0 0L760 0L765 20L745 90L700 130L665 145L632 180L648 235L625 245L615 210L600 185L570 170L535 190L540 210L580 215L550 245L565 285L570 320L555 350L530 385L450 405L410 440L435 475L443 520L410 555L385 525L350 525L345 560L385 630L410 700L395 715L345 660L340 570L325 470L300 475L295 440L262 402L225 415L150 485L150 530L125 572L95 510L75 410L45 395L0 370Z' +
      'M645 258L700 240L745 215L755 150L765 235L750 255L690 268L660 290ZM770 110L812 125L790 145L770 150ZM780 0L785 50L795 80L785 88ZM445 660L520 600L542 615L520 680L485 710L460 705ZM665 685L700 690L720 715L760 705L820 740L835 765L830 800L800 770L740 755L715 720ZM148 575L160 570L165 590L150 600ZM560 460L580 460L575 490L560 480ZM575 490L605 530L600 535ZM585 580L612 570L618 592L595 600ZM310 612L340 640L390 700L360 690ZM415 750L480 762L500 775L430 770ZM550 680L580 665L560 690L580 730L555 720ZM560 360L575 380L560 420Z' +
      'M487 950L530 925L575 900L580 870L615 845L655 860L670 820L700 810L718 825L715 870L755 892L765 850L780 815L805 850L815 890L850 940L888 975L885 1060L850 1135L810 1155L770 1145L745 1120L725 1075L705 1085L660 1063L610 1075L560 1095L520 1105L500 1050L487 1000ZM800 1180L835 1182L828 1208L808 1210ZM1030 1240L1068 1215L1068 1240L1050 1260ZM35 1288L50 1285L52 1300L40 1298ZM1000 920L1022 928L1018 936L1002 930Z',
    water: 'M532 200L545 180L575 170L580 185L605 185L612 210L625 240L640 270L600 260L570 285L550 245L560 225L582 212L545 212Z',
    coast:
      'M765 125L735 120L715 120L700 102M760 125L752 200L695 275L668 280L645 310L625 322L642 350L640 378L618 388L615 350L602 345L605 325L575 325L572 308L530 330L540 350L578 352L545 375L568 410L562 435L572 455L540 505L520 516L455 530L425 535L412 555L442 590L445 630L408 657L400 640L362 612L352 625L350 650L388 690L395 730L375 720L340 660L345 630L330 578L305 590L298 560L275 535L272 516L238 525L165 590L158 650L135 663L118 640L95 560L92 520L80 538L55 520L65 515L30 488L0 488' +
      'M770 115L788 190L775 200L780 235L765 235L768 200ZM765 248L805 268L780 288L748 290ZM748 290L765 325L752 375L700 388L665 405L650 425L648 400L710 370L712 352L735 345L755 300ZM665 390L700 380L690 395ZM660 400L710 385M558 505L570 490L565 520L556 515ZM450 540L465 545L460 560L445 555ZM158 650L178 660L180 680L165 685ZM285 625L287 612M555 560L575 560L570 600L555 595ZM560 610L600 620L605 640L585 640L570 630ZM575 650L605 640L595 655ZM575 670L612 655L612 685L595 682ZM528 660L550 637M570 628L590 650M585 615L602 632M590 665L598 680' +
      'M312 688L335 695L380 740L410 770L408 805L375 775L345 725ZM410 805L475 810L510 825L450 822L410 808ZM515 823L620 825L590 840L600 828L530 830ZM545 836L560 840M445 730L470 722L520 680L542 692L535 730L515 765L500 780L455 770L448 745ZM550 740L600 728L600 735L565 742L580 755L568 765L580 795L565 775L552 795L555 765L545 775ZM625 735L635 727L630 750ZM610 775L655 775L640 780ZM660 750L685 745L690 760L725 757L800 778L818 800L850 843L820 835L795 818L775 832L735 820L730 795L690 775L670 765ZM830 800L870 785L855 772L872 782L865 802ZM692 798L690 808M662 820L664 815M408 760L420 765L412 772ZM386 738L400 750M318 715L320 718M330 730L334 734M345 752L349 758M432 770L436 773M595 760L605 762M815 764L817 766M705 752L708 754' +
      'M495 962L520 948L560 938L575 910L590 915L620 880L645 890L658 860L715 862L705 890L755 918L770 850L790 888L805 910L812 932L845 965L878 1005L880 1040L848 1110L845 1135L810 1155L798 1145L780 1148L750 1138L740 1118L720 1115L725 1082L705 1105L692 1078L660 1065L612 1075L590 1092L550 1095L535 1108L515 1105L508 1090L510 1065L490 1010L488 985ZM716 1115L728 1100L728 1115ZM798 1178L812 1182L828 1180L825 1208L808 1212ZM1068 1178L1055 1185L1020 1225L1006 1248L1030 1258L1045 1250L1052 1230L1068 1210' +
      'M152 230L115 228L98 236L100 252L108 238ZM722 98L724 104M895 180L905 170M815 257L832 245M842 240L848 237M862 225L864 223M998 97L1008 105M893 800L910 808M918 820L920 823M925 810L945 820M935 825L955 840M958 838L967 848M1008 888L1018 906M985 946L1012 966M988 946L1010 964M52 1288L66 1294L54 1298ZM627 480L631 475M643 458L645 456M1065 134L1068 135M1065 1100L1068 1102M1016 1266L1020 1262',
    dots: [[911, 33, 5], [890, 64, 4], [878, 80, 4], [854, 97, 4], [840, 109, 5], [824, 117, 4], [820, 133, 4], [624, 268, 5], [640, 282, 4], [652, 335, 4], [635, 357, 4], [595, 380, 5], [449, 441, 7], [664, 290, 8], [804, 507, 4], [817, 491, 4], [1035, 495, 4], [866, 577, 4], [883, 581, 4], [895, 569, 4], [837, 598, 4], [820, 607, 4], [768, 598, 4], [701, 598, 6], [990, 615, 4], [1022, 680, 4], [78, 577, 4], [82, 594, 4], [84, 611, 4], [80, 627, 4], [290, 598, 4], [310, 643, 4], [327, 664, 4], [388, 557, 5], [602, 504, 4], [577, 541, 4], [614, 552, 5], [437, 697, 4], [430, 709, 4], [657, 676, 4], [656, 692, 4], [636, 648, 4], [635, 668, 5], [648, 713, 8], [630, 700, 4], [780, 692, 4], [824, 697, 4], [858, 692, 4], [887, 714, 8], [868, 726, 9], [860, 740, 8], [907, 741, 4], [925, 750, 5], [935, 765, 5], [943, 756, 4], [963, 771, 5], [973, 796, 4], [957, 791, 4], [953, 809, 4], [925, 766, 4], [1018, 857, 4], [1022, 874, 4], [1034, 882, 4], [726, 837, 5], [795, 1170, 4], [833, 1165, 4], [1038, 1273, 4], [1014, 1309, 4], [84, 1348, 3], [494, 754, 5], [700, 720, 8], [700, 740, 8], [285, 540, 4]],
  },
];

const PACIFIC_DOTS: number[][] = [
  [234, 1856, 4],
  [262, 1863, 4],
  [340, 1874, 4],
  [486, 1906, 3],
  [638, 1927, 4],
  [688, 1920, 4],
];

/* Rounds the corners of closed straight-edged outlines, so the land reads as soft blobs. */
function soften(path: string): string {
  return path
    .split('Z')
    .filter(Boolean)
    .map((ring) => {
      const pts = ring
        .slice(1)
        .split('L')
        .map((p) => p.split(' ').map(Number));
      const toward = (a: number[], b: number[]) => {
        const len = Math.hypot(b[0] - a[0], b[1] - a[1]) || 1;
        const t = Math.min(len * 0.45, 16) / len;
        return `${(a[0] + (b[0] - a[0]) * t).toFixed(1)} ${(a[1] + (b[1] - a[1]) * t).toFixed(1)}`;
      };
      const n = pts.length;
      return (
        pts
          .map((p, i) => {
            const prev = pts[(i + n - 1) % n];
            const next = pts[(i + 1) % n];
            return `${i === 0 ? 'M' : 'L'}${toward(p, prev)}Q${p[0]} ${p[1]} ${toward(p, next)}`;
          })
          .join('') + 'Z'
      );
    })
    .join('');
}

function WorldMap() {
  return (
    <svg viewBox="0 0 3468 2370" className="w-full" role="img" aria-label="World map">
      <g fill="#ffd2db" stroke="#ffd2db" strokeWidth="4" strokeLinejoin="round">
        {REGIONS.map((r) => (
          <path key={r.at} transform={r.at} d={soften(r.land)} />
        ))}
      </g>
      <g fill="#ffffff" stroke="#ffffff" strokeWidth="3" strokeLinejoin="round">
        {REGIONS.map((r) => (
          <path key={r.at} transform={r.at} d={soften(r.water ?? '')} />
        ))}
      </g>
      <g fill="#ffd2db">
        {REGIONS.map((r) => (
          <g key={r.at} transform={r.at}>
            {(r.dots ?? []).map(([x, y, s]) => (
              <circle key={`${x}-${y}`} cx={x} cy={y} r={s} />
            ))}
          </g>
        ))}
        {PACIFIC_DOTS.map(([x, y, s]) => (
          <circle key={`${x}-${y}`} cx={x} cy={y} r={s} />
        ))}
      </g>
      <g fill="none" stroke="#a9093f" strokeOpacity="0.850" strokeWidth="3.500" strokeLinejoin="round" strokeLinecap="round">
        {REGIONS.map((r) => (
          <path key={r.at} transform={r.at} d={r.coast} />
        ))}
        <path d="M92 1808L104 1811M52 2152L56 2155" />
      </g>
    </svg>
  );
}

/* ---------- Landing page ---------- */

function SiteHeader() {
  return (
    <header className="ml-[13.5%] flex w-[72%] items-center justify-between pt-3 text-[17px] leading-6 text-[#7a0b2c]">
      <a href="#top" className="pt-1 text-lg font-bold">
        penpal.io
      </a>
      <div className="flex items-center gap-[100px]">
        <nav aria-label="Main" className="flex gap-10">
          <a href="#home">home</a>
          <a href="#about">about</a>
          <a href="#contact">contact</a>
        </nav>
        <div className="flex items-center gap-10">
          <a href="#login">Login</a>
          <button className="h-10 w-[129px] rounded-lg bg-[#ffb3c0] text-white">Sing up</button>
        </div>
      </div>
    </header>
  );
}

function Hero() {
  return (
    <main className="flex items-start overflow-hidden pl-[13.5%] pt-[33px]">
      <section className="w-[448px] shrink-0 pt-[194px]">
        <h1 className="text-[#ffb3c0]">
          <span className="block whitespace-nowrap text-[60px] font-medium leading-[72px]">Find your next</span>
          <span className="mt-[10px] flex items-end justify-between pr-[35px]">
            <span className="whitespace-nowrap font-['Roboto_Condensed','Roboto',sans-serif] text-[100px] font-normal italic leading-[112px]">
              Pen Pal
            </span>
            <Envelope className="mb-[22px] h-[72px] w-[101px]" />
          </span>
        </h1>
        <p className="mt-[14px] w-[406px] text-justify text-sm font-medium leading-5 text-[#7a0b2c]">
          Pen pals or <strong>penfriends</strong> are people who regularly write to each other, particularly via
          postal mail. Pen pals are usually strangers whose relationship is based primarily, or even solely, on
          their exchange of letters. A pen pal relationship is often used to practice reading and writing in a
          foreign language, to improve literacy, to learn more about other countries and lifestyles, and to make
          friendships.
        </p>
        <button className="mt-10 h-[49px] w-[245px] rounded-full bg-[#ff486b] text-xl font-medium text-white">
          find me a pen pal
        </button>
      </section>
      <div className="min-w-0 flex-1">
        <WorldMap />
      </div>
    </main>
  );
}

export default function App() {
  return (
    <div className="min-h-screen border-l-2 border-[#3b4d57] bg-white">
      <div className="font-['Ubuntu','Open_Sans',sans-serif]">
        <TabStrip />
        <Toolbar />
        <BookmarksBar />
      </div>
      <div className="font-['Inter','Liberation_Sans',sans-serif]">
        <SiteHeader />
        <Hero />
      </div>
    </div>
  );
}
